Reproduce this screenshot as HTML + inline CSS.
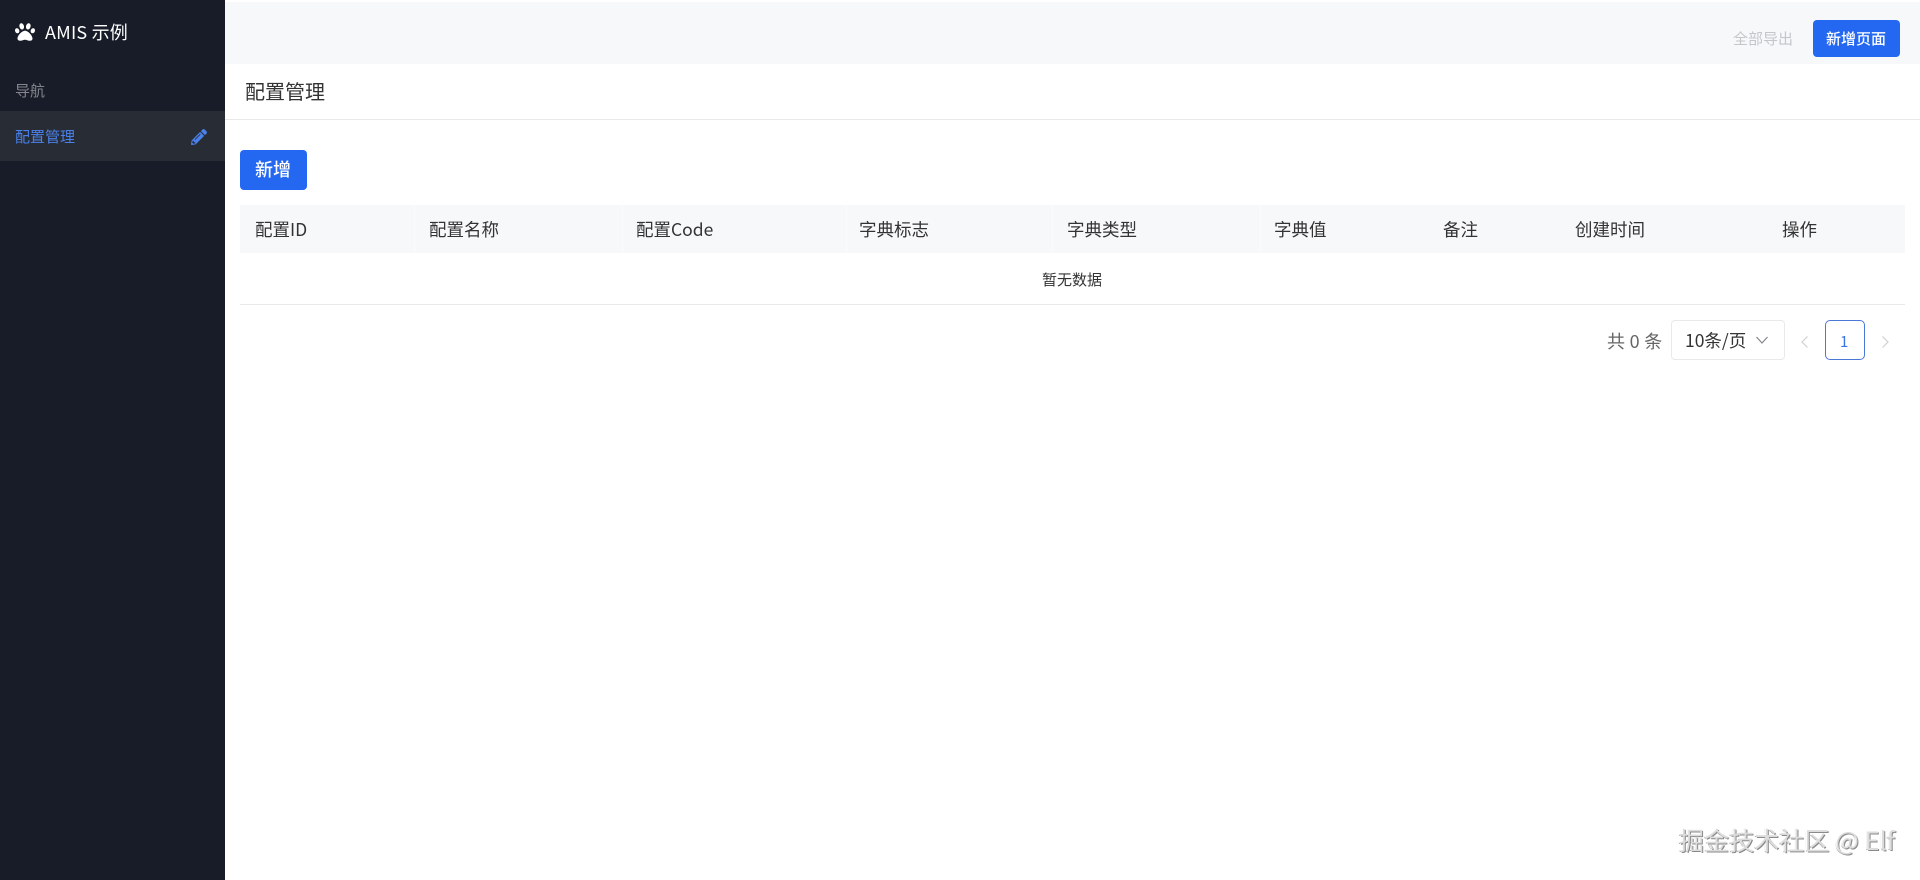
<!DOCTYPE html>
<html lang="zh">
<head>
<meta charset="utf-8">
<title>AMIS 示例</title>
<style>
html,body{margin:0;padding:0;width:1920px;height:880px;overflow:hidden;background:#fff;font-family:"Liberation Sans","Noto Sans CJK SC",sans-serif;}
*{box-sizing:border-box;}
.t{position:absolute;white-space:nowrap;line-height:1;font-family:"Noto Sans CJK SC",sans-serif;}
.box{position:absolute;}
.th{font-size:17.5px;color:#333;top:221px;line-height:18px;}
.sep{position:absolute;top:205px;width:1px;height:48px;background:#fafbfc;}
</style>
</head>
<body>
<div class="box" style="left:0;top:0;width:225px;height:880px;background:#181c28;"></div>
<div class="box" style="left:0;top:111px;width:225px;height:50px;background:#282c34;"></div>
<svg class="box" style="left:15px;top:22px;width:20px;height:20px;" viewBox="0 0 512 512"><path fill="#fff" d="M256 224c-79.41 0-192 122.76-192 200.25 0 34.9 26.81 55.75 71.74 55.75 48.84 0 81.09-25.08 120.26-25.08 39.51 0 71.85 25.08 120.26 25.08 44.93 0 71.74-20.85 71.74-55.75C448 346.76 335.41 224 256 224zm-147.28-12.61c-10.4-34.65-42.44-57.09-71.56-50.13-29.12 6.96-44.29 40.69-33.89 75.34 10.4 34.65 42.44 57.09 71.56 50.13 29.12-6.96 44.29-40.69 33.89-75.34zm84.72-20.78c30.94-8.14 46.42-49.94 34.58-93.36s-46.52-72.01-77.46-63.87-46.42 49.94-34.58 93.36c11.84 43.42 46.52 72.02 77.46 63.87zm281.39-29.34c-29.12-6.96-61.15 15.48-71.56 50.13-10.4 34.65 4.77 68.38 33.89 75.34 29.12 6.96 61.15-15.48 71.56-50.13 10.4-34.65-4.77-68.38-33.89-75.34zm-156.27 29.34c30.94 8.14 65.62-20.45 77.46-63.87 11.84-43.42-3.64-85.21-34.58-93.36s-65.62 20.45-77.46 63.87c-11.84 43.42 3.64 85.22 34.58 93.36z"/></svg>
<div class="t" style="left:45px;top:23px;font-size:18px;color:#fff;letter-spacing:.2px;">AMIS 示例</div>
<div class="t" style="left:15px;top:83px;font-size:15px;color:#83868c;">导航</div>
<div class="t" style="left:15px;top:129px;font-size:15px;color:#4a80e8;">配置管理</div>
<svg class="box" style="left:191px;top:129px;width:16px;height:16px;" viewBox="0 0 512 512"><path fill="#4a80e8" d="M497.9 142.1l-46.1 46.1c-4.7 4.7-12.3 4.7-17 0l-111-111c-4.7-4.7-4.7-12.3 0-17l46.1-46.1c18.7-18.7 49.1-18.7 67.9 0l60.1 60.1c18.8 18.7 18.8 49.1 0 67.9zM284.2 99.8L21.6 362.4.4 483.9c-2.9 16.4 11.4 30.6 27.8 27.8l121.5-21.3 262.6-262.6c4.7-4.7 4.7-12.3 0-17l-111-111c-4.8-4.7-12.4-4.7-17.1 0zM124.1 339.9c-5.5-5.5-5.5-14.3 0-19.8l154-154c5.5-5.5 14.3-5.5 19.8 0s5.5 14.3 0 19.8l-154 154c-5.5 5.5-14.3 5.5-19.8 0zM88 424h48v36.3l-64.5 11.3-31.1-31.1L51.7 376H88v48z"/></svg>

<div class="box" style="left:225px;top:2px;width:1695px;height:62px;background:#f7f8fa;"></div>
<div class="t" style="left:1733px;top:31px;font-size:15px;color:#c4c6ca;">全部导出</div>
<div class="box" style="left:1813px;top:20px;width:87px;height:37px;background:#2468f2;border-radius:4px;"></div>
<div class="t" style="left:1826px;top:31px;font-size:15px;color:#fff;font-weight:500;">新增页面</div>

<div class="t" style="left:245px;top:81px;font-size:20px;color:#333;">配置管理</div>
<div class="box" style="left:225px;top:119px;width:1695px;height:1px;background:#e8e9eb;"></div>

<div class="box" style="left:240px;top:150px;width:67px;height:40px;background:#2468f2;border-radius:4px;"></div>
<div class="t" style="left:255px;top:160px;font-size:18px;color:#fff;font-weight:500;">新增</div>

<div class="box" style="left:240px;top:205px;width:1665px;height:48px;background:#f7f8fa;"></div>
<div class="sep" style="left:414px;"></div>
<div class="sep" style="left:622px;"></div>
<div class="sep" style="left:846px;"></div>
<div class="sep" style="left:1052px;"></div>
<div class="sep" style="left:1260px;"></div>
<div class="t th" style="left:255px;">配置ID</div>
<div class="t th" style="left:429px;">配置名称</div>
<div class="t th" style="left:636px;">配置Code</div>
<div class="t th" style="left:859px;">字典标志</div>
<div class="t th" style="left:1067px;">字典类型</div>
<div class="t th" style="left:1274px;">字典值</div>
<div class="t th" style="left:1443px;">备注</div>
<div class="t th" style="left:1575px;">创建时间</div>
<div class="t th" style="left:1782px;">操作</div>
<div class="t" style="left:1042px;top:272px;font-size:15px;color:#333;">暂无数据</div>
<div class="box" style="left:240px;top:304px;width:1665px;height:1px;background:#e8e9eb;"></div>

<div class="t" style="left:1607px;top:332px;font-size:18px;color:#666;letter-spacing:.3px;">共 0 条</div>
<div class="box" style="left:1671px;top:320px;width:114px;height:40px;border:1px solid #e8e9eb;border-radius:4px;background:#fff;"></div>
<div class="t" style="left:1685px;top:332px;font-size:17.5px;color:#333;">10条/页</div>
<svg class="box" style="left:1755px;top:334px;width:14px;height:12px;" viewBox="0 0 14 12"><path d="M1.5 3l5.5 6 5.5-6" fill="none" stroke="#84868c" stroke-width="1.2"/></svg>
<svg class="box" style="left:1800px;top:335px;width:10px;height:14px;" viewBox="0 0 10 14"><path d="M7.5 1.5L2 7l5.5 5.5" fill="none" stroke="#cfd0d3" stroke-width="1.2"/></svg>
<div class="box" style="left:1825px;top:320px;width:40px;height:40px;border:1px solid #4a78d8;border-radius:5px;background:#fff;"></div>
<div class="t" style="left:1840px;top:334px;font-size:15px;color:#3b74e0;">1</div>
<svg class="box" style="left:1880px;top:335px;width:10px;height:14px;" viewBox="0 0 10 14"><path d="M2.5 1.5L8 7l-5.5 5.5" fill="none" stroke="#cfd0d3" stroke-width="1.2"/></svg>

<div class="t" style="left:1679px;top:828px;font-size:25px;color:#dcdcdc;letter-spacing:.1px;text-shadow:1px 1px 0 #8a8a8a,-1px -1px 0 #fff,-1px 0 0 #a8a8a8;">掘金技术社区 @ Elf</div>
</body>
</html>
